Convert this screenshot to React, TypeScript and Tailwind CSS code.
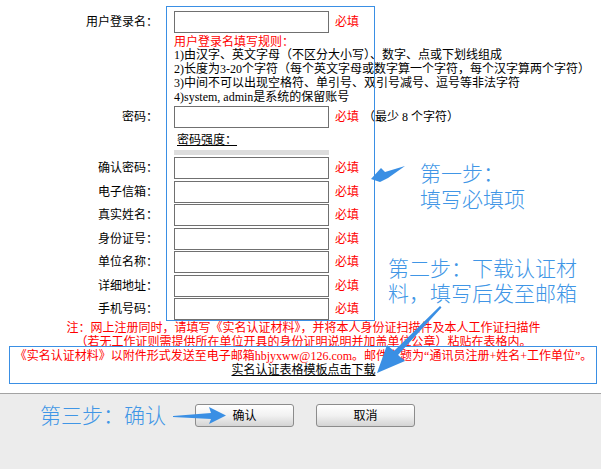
import type { ReactNode } from "react";

const FIELDS = ["确认密码", "电子信箱", "真实姓名", "身份证号", "单位名称", "详细地址", "手机号码"];

function Row({ label, children, className = "" }: { label?: string; children: ReactNode; className?: string }) {
  return (
    <div className={`flex items-center ${className}`}>
      <div className="w-[158px] shrink-0 text-right">{label ? `${label}：` : ""}</div>
      <div className="ml-[16px] flex items-center whitespace-nowrap">{children}</div>
    </div>
  );
}

function TextInput({ type = "text" }: { type?: string }) {
  return <input type={type} className="h-[22px] w-[155px] border border-[#707070] bg-white outline-none" />;
}

function Required() {
  return <span className="ml-[6px] text-[#ff0000]">必填</span>;
}

function Arrows() {
  return (
    <svg className="pointer-events-none absolute inset-0" width="601" height="469" viewBox="0 0 601 469">
      <g fill="#3a8fe4">
        <polygon points="371,179 381,168 385,172 405,166 388,178 380,182" />
        <polygon points="377,373 387,345 394,351 440,306 441.5,307.5 398,355 405,361" />
        <polygon points="226,415.5 209,407 211,413 173,416 173,417 211,419 209,424" />
      </g>
    </svg>
  );
}

export default function App() {
  return (
    <div className="relative h-[469px] w-[601px] overflow-hidden bg-white font-['Liberation_Serif','Noto_Sans_CJK_SC',serif] text-[12px] leading-[14px] text-black">
      <div className="flex h-[393px] flex-col">
        <div className="pt-[11px]">
          <Row label="用户登录名" className="h-[22px]">
            <TextInput />
            <Required />
          </Row>
          <Row className="mt-[2.5px]">
            <div className="leading-[13.75px]">
              <p className="text-[#ff0000]">用户登录名填写规则：</p>
              <p>1)由汉字、英文字母（不区分大小写）、数字、点或下划线组成</p>
              <p>2)长度为3-20个字符（每个英文字母或数字算一个字符，每个汉字算两个字符）</p>
              <p>3)中间不可以出现空格符、单引号、双引号减号、逗号等非法字符</p>
              <p>4)system, admin是系统的保留账号</p>
            </div>
          </Row>
          <Row label="密码" className="mt-[1.25px] h-[22px]">
            <TextInput type="password" />
            <Required />
            <span className="ml-[4px]">（最少 8 个字符）</span>
          </Row>
          <Row className="mt-[5px]">
            <div className="flex flex-col">
              <span className="ml-[3px] underline">密码强度：</span>
              <div className="mt-[3.5px] h-[5px] w-[155px] bg-[#dddddd]" />
            </div>
          </Row>
          <div className="mt-[1.5px]">
            {FIELDS.map((f) => (
              <Row key={f} label={f} className="h-[23.5px]">
                <TextInput />
                <Required />
              </Row>
            ))}
          </div>
        </div>

        <div className="pl-[6px] text-center">
          <p className="text-[#ff0000]">注：网上注册同时，请填写《实名认证材料》，并将本人身份证扫描件及本人工作证扫描件</p>
          <p className="text-[#ff0000]">（若无工作证则需提供所在单位开具的身份证明说明并加盖单位公章）粘贴在表格内。</p>
          <p className="text-[#ff0000]">《实名认证材料》以附件形式发送至电子邮箱hbjyxww@126.com。邮件主题为“通讯员注册+姓名+工作单位”。</p>
          <p>
            <a className="underline">实名认证表格模板点击下载</a>
          </p>
        </div>
      </div>

      <div className="h-[76px] border-t border-[#a3a3a3] bg-[#ececec] pt-[10px]">
        <div className="flex gap-[22px] pl-[195px]">
          <button className="h-[23px] w-[99px] rounded-[3px] border border-[#8c8c8c] bg-linear-to-b from-white via-[#f1f1f1] to-[#d4d4d4]">
            确认
          </button>
          <button className="h-[23px] w-[99px] rounded-[3px] border border-[#8c8c8c] bg-linear-to-b from-white via-[#f1f1f1] to-[#d4d4d4]">
            取消
          </button>
        </div>
      </div>

      {/* annotations drawn over the form */}
      <div className="pointer-events-none absolute left-[166px] top-[6px] h-[315px] w-[209px] border-[1.5px] border-[#3a8fe4]" />
      <div className="pointer-events-none absolute left-[9px] top-[346px] h-[38px] w-[588px] border-[1.5px] border-[#3a8fe4]" />
      <div className="absolute left-[420px] top-[159px] font-['Noto_Sans_CJK_SC',sans-serif] text-[21px] font-light leading-[26px] text-[#4096e6]">
        <p>第一步：</p>
        <p>填写必填项</p>
      </div>
      <div className="absolute left-[388px] top-[255px] font-['Noto_Sans_CJK_SC',sans-serif] text-[21px] font-light leading-[25px] text-[#4096e6]">
        <p>第二步：下载认证材</p>
        <p>料，填写后发至邮箱</p>
      </div>
      <div className="absolute left-[40px] top-[402px] font-['Noto_Sans_CJK_SC',sans-serif] text-[21px] font-light leading-[25px] text-[#4096e6]">
        第三步：确认
      </div>
      <Arrows />
    </div>
  );
}
